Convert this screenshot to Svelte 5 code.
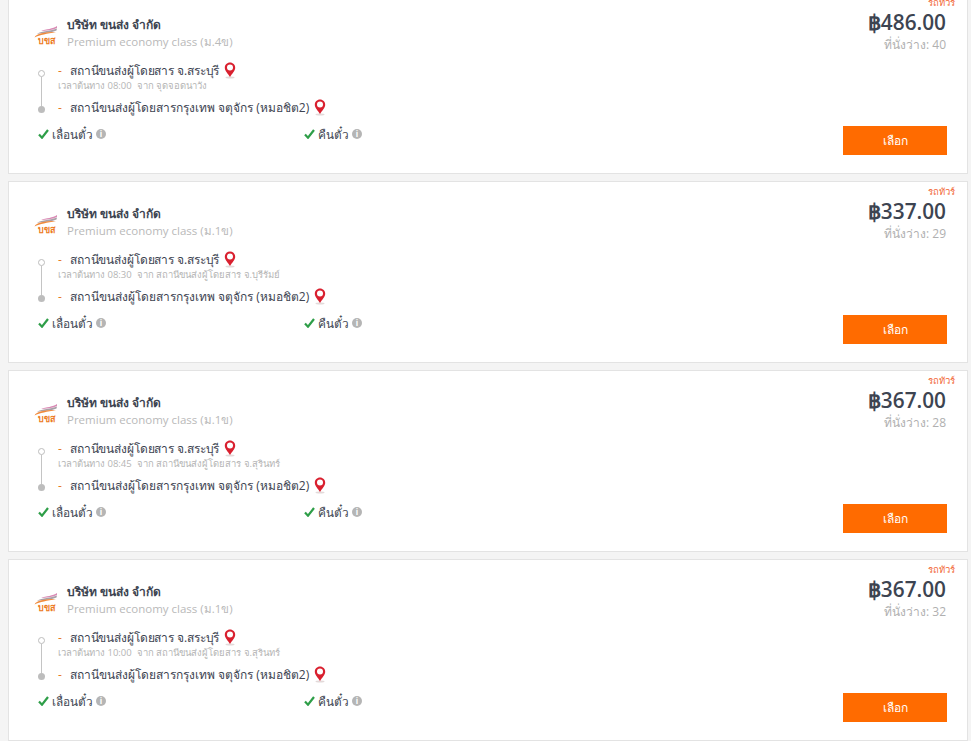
<script>
  const trips = [
    { cls: 'Premium economy class (ม.4ข)', price: '486.00', seats: 40, time: '08:00', from: 'จุดจอดนาวัง' },
    { cls: 'Premium economy class (ม.1ข)', price: '337.00', seats: 29, time: '08:30', from: 'สถานีขนส่งผู้โดยสาร จ.บุรีรัมย์' },
    { cls: 'Premium economy class (ม.1ข)', price: '367.00', seats: 28, time: '08:45', from: 'สถานีขนส่งผู้โดยสาร จ.สุรินทร์' },
    { cls: 'Premium economy class (ม.1ข)', price: '367.00', seats: 32, time: '10:00', from: 'สถานีขนส่งผู้โดยสาร จ.สุรินทร์' }
  ];
</script>

{#snippet pin()}
  <svg class="pin" width="12" height="17" viewBox="0 0 12 17">
    <ellipse cx="6" cy="15.6" rx="4.5" ry="1" fill="#e3d9d9" />
    <path d="M6 .6C3 .6.8 2.9.8 5.7c0 3.4 3.2 5.6 5.2 9.4 2-3.8 5.2-6 5.2-9.4C11.200 2.900 9 .6 6 .6z" fill="#d9202f" />
    <circle cx="6" cy="5.600" r="3" fill="#fff" />
  </svg>
{/snippet}

{#snippet policy(label)}
  <div class="policy">
    <svg width="11" height="10" viewBox="0 0 11 10"><path d="M1 5.500 4 8.700 10 1" fill="none" stroke="#2e9e48" stroke-width="2.200" /></svg>
    <span>{label}</span>
    <span class="info">i</span>
  </div>
{/snippet}

<div class="list">
  {#each trips as t}
    <div class="card">
      <div class="left">
        <div class="company">
          <svg class="logo" width="24" height="23" viewBox="0 0 24 23">
            <path d="M23 0C19 3 12 3 7 5 12 4.500 18 4.500 23 2z" fill="#d98bb5" />
            <path d="M23 2.500C17 5 8 4.500 3 8 9 6.500 17 7 22.500 4.500z" fill="#a9a0a8" />
            <path d="M0.500 11.500C2.500 7.500 10 6 22 6 13 8 6 8.500 0.500 11.500z" fill="#f08a3c" />
            <text x="12" y="18" text-anchor="middle" class="logo-text">บขส</text>
          </svg>
          <div>
            <div class="name">บริษัท ขนส่ง จำกัด</div>
            <div class="cls">{t.cls}</div>
          </div>
        </div>
        <div class="route">
          <div class="track">
            <span class="ring"></span>
            <span class="bar"></span>
            <span class="dot"></span>
          </div>
          <div class="stops">
            <div class="stop first"><span class="dash">-</span>สถานีขนส่งผู้โดยสาร จ.สระบุรี {@render pin()}</div>
            <div class="depart">เวลาต้นทาง {t.time} &nbsp;จาก {t.from}</div>
            <div class="stop second"><span class="dash">-</span>สถานีขนส่งผู้โดยสารกรุงเทพ จตุจักร (หมอชิต2) {@render pin()}</div>
          </div>
        </div>
        <div class="policies">
          {@render policy('เลื่อนตั๋ว')}
          {@render policy('คืนตั๋ว')}
        </div>
      </div>
      <div class="right">
        <div class="type">รถทัวร์</div>
        <div class="price">฿{t.price}</div>
        <div class="seats">ที่นั่งว่าง: {t.seats}</div>
        <button class="pick">เลือก</button>
      </div>
    </div>
  {/each}
</div>

<style>
  :global(body) {
    background: #f4f4f4;
    overflow: hidden;
  }

  .list {
    display: flex;
    flex-direction: column;
    gap: 7px;
    margin-top: -8px;
    padding: 0 3px 0 8px;
    font-family: "Open Sans", "Noto Sans", sans-serif;
    color: #3d4451;
  }

  .card {
    display: flex;
    justify-content: space-between;
    height: 182px;
    box-sizing: border-box;
    background: #fff;
    border: 1px solid #e3e3e3;
  }

  .left {
    padding: 23px 0 0 25px;
  }

  .company {
    display: flex;
    align-items: center;
    gap: 9px;
    height: 34px;
  }

  .logo {
    margin-top: 8px;
    flex-shrink: 0;
  }

  .logo-text {
    font-size: 9px;
    font-weight: 700;
    fill: #ec7a22;
  }

  .name {
    font-size: 12px;
    font-weight: 600;
    line-height: 17px;
    color: #3d4451;
  }

  .cls {
    font-size: 11.500px;
    line-height: 17px;
    color: #b9b9b9;
  }

  .route {
    display: flex;
    margin-top: 11px;
    margin-left: 4px;
  }

  .track {
    width: 16px;
    padding: 9px 0 0;
    display: flex;
    flex-direction: column;
    align-items: center;
    margin-left: -5px;
    margin-right: 9px;
  }

  .ring {
    width: 5px;
    height: 5px;
    border: 1px solid #bdbdbd;
    border-radius: 50%;
  }

  .bar {
    width: 1px;
    flex: 1;
    background: #c4c4c4;
  }

  .dot {
    width: 7px;
    height: 7px;
    background: #bdbdbd;
    border-radius: 50%;
    margin-bottom: 3px;
  }

  .stop {
    display: flex;
    align-items: center;
    gap: 0;
    height: 18px;
    font-size: 12px;
    color: #3d4451;
    white-space: pre;
  }

  .first {
    letter-spacing: -0.130px;
  }

  .second {
    margin-top: 6px;
  }

  .dash {
    width: 12px;
    color: #e67a1e;
  }

  .pin {
    margin-left: 2px;
  }

  .depart {
    font-size: 9.500px;
    line-height: 12px;
    margin-top: 1px;
    color: #b5b5b5;
  }

  .policies {
    display: flex;
    margin-top: 9px;
    margin-left: 4px;
  }

  .policy {
    display: flex;
    align-items: center;
    gap: 3px;
    width: 266px;
    font-size: 11.800px;
    line-height: 18px;
    color: #3d4451;
  }

  .info {
    width: 10px;
    height: 10px;
    border-radius: 50%;
    background: #b5b5b5;
    color: #fff;
    font-size: 8px;
    font-weight: 700;
    line-height: 10px;
    text-align: center;
  }

  .right {
    display: flex;
    flex-direction: column;
    align-items: flex-end;
    padding: 3px 12px 18px 0;
  }

  .type {
    font-size: 9.500px;
    line-height: 13px;
    color: #f26a3a;
  }

  .price {
    margin-right: 9px;
    font-size: 20.800px;
    font-weight: 600;
    line-height: 27px;
    color: #3d4451;
  }

  .seats {
    margin-right: 9px;
    margin-top: 1px;
    font-size: 12px;
    line-height: 16px;
    color: #b0b0b0;
  }

  .pick {
    margin-top: auto;
    margin-right: 8px;
    width: 104px;
    height: 29px;
    border: none;
    background: #ff6b00;
    color: #fff;
    font-family: inherit;
    font-size: 12px;
  }
</style>
